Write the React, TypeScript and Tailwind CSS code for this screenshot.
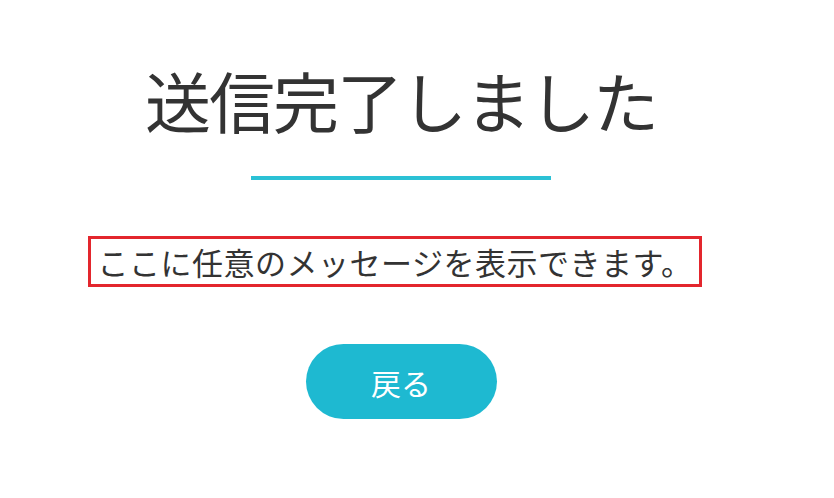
export default function App() {
  return (
    <div
      className="min-h-screen bg-white flex flex-col items-center pr-[32px] text-[#333333]"
      style={{ fontFamily: '"Noto Sans CJK JP", "Noto Sans", sans-serif' }}
    >
      <h1 className="mt-[66px] text-[66px] leading-none font-normal tracking-[-2px] whitespace-nowrap">送信完了しました</h1>
      <div className="mt-[44px] w-[300px] h-[4px] bg-[#2bc1d5]" />
      <p className="mt-[56px] mr-[12px] border-[3px] border-[#e3262d] px-[7px] py-[4px] text-[31px] leading-[37px] tracking-[0.5px] whitespace-nowrap">
        ここに任意のメッセージを表示できます。
      </p>
      <button className="mt-[57px] w-[191px] h-[75px] rounded-full bg-[#1eb9d1] text-white text-[30px] leading-none">
        戻る
      </button>
    </div>
  );
}
